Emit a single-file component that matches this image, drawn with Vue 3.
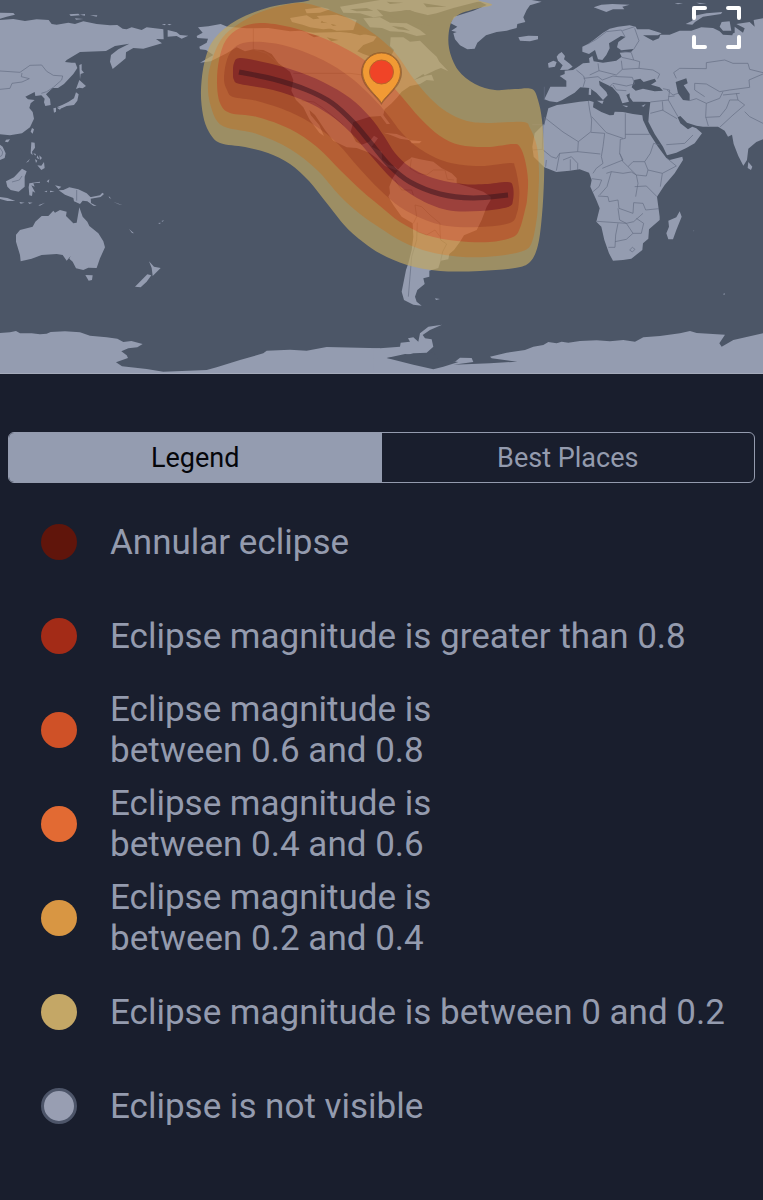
<script setup>
import { ref } from 'vue'

const activeTab = ref('legend')

const legend = [
  { tone: 'annular', label: 'Annular eclipse' },
  { tone: 'over80', label: 'Eclipse magnitude is greater than 0.8' },
  { tone: 'over60', label: 'Eclipse magnitude is\nbetween 0.6 and 0.8' },
  { tone: 'over40', label: 'Eclipse magnitude is\nbetween 0.4 and 0.6' },
  { tone: 'over20', label: 'Eclipse magnitude is\nbetween 0.2 and 0.4' },
  { tone: 'over0', label: 'Eclipse magnitude is between 0 and 0.2' },
  { tone: 'none', label: 'Eclipse is not visible' },
]

// Catmull-Rom spline through a list of "x,y" points
function smooth(text, closed) {
  const p = text.split(' ').map((s) => s.split(',').map(Number))
  const n = p.length
  const at = (i) => (closed ? p[(i + n) % n] : p[Math.max(0, Math.min(n - 1, i))])
  let d = `M${p[0]}`
  for (let i = 0; i < (closed ? n : n - 1); i++) {
    const [a, b, c, e] = [at(i - 1), at(i), at(i + 1), at(i + 2)]
    d += `C${b[0] + (c[0] - a[0]) / 6},${b[1] + (c[1] - a[1]) / 6} ${c[0] - (e[0] - b[0]) / 6},${c[1] - (e[1] - b[1]) / 6} ${c}`
  }
  return closed ? d + 'Z' : d
}

const bands = [
  { tone: 'over0', d: smooth('325,-4 307,1 270,7 237,20 215,38 205,60 201,90 203,115 209,132 220,143 245,147 268,153 290,164 309,181 325,201 346,227 363,242 381,254 407,265 440,271 480,271 515,268 530,262 538,245 542,215 544,180 544,150 542,120 538,100 532,89 515,89 495,90 475,84 458,70 449,48 450,26 458,15 475,9 492,5 480,1 460,-4', true) },
  { tone: 'over20', d: smooth('300,3 273,8 250,17 223,37 210,67 208,90 211,107 217,121 228,128 257,134 290,149 317,170 340,196 360,214 380,228 403,242 430,252 463,257 497,256 523,251 532,242 537,217 538,200 539,173 537,147 530,128 523,122 490,123 467,121 447,112 430,98 413,78 397,55 383,41 367,29 348,18 323,8', true) },
  { tone: 'over40', d: smooth('260,23 240,28 226,40 219,60 217,83 220,103 230,113 257,117 290,129 317,147 340,170 362,191 380,206 400,222 426,235 457,241 490,242 513,237 520,228 525,210 527,200 528,180 525,160 520,147 513,144 487,147 460,145 440,136 420,118 402,97 385,78 370,64 350,51 323,38 290,27', true) },
  { tone: 'over60', d: smooth('243,43 232,50 226,63 224,80 227,90 233,97 257,101 290,112 317,127 338,144 359,168 380,190 400,207 423,219 447,226 480,227 510,223 517,213 519,200 519,187 515,167 510,163 480,166 447,162 420,149 402,133 388,115 372,97 350,77 323,60 290,47 263,42', true) },
  { tone: 'over80', d: smooth('240,58 234,63 233,73 234,80 240,84 273,90 305,101 330,115 351,133 372,157 393,180 417,198 447,210 480,211 508,207 513,200 513,187 508,182 485,184 463,184 433,178 410,167 395,153 384,136 370,117 350,98 323,82 293,70 263,62', true) },
]
const track = smooth('239,72 273,79 307,90 332,103 353,122 370,142 390,166 410,182 440,194 473,198 508,195', false)
</script>

<template>
  <main class="page">
    <section class="map" aria-label="Eclipse visibility map">
      <svg class="world" viewBox="0 0 763 374" role="img" aria-label="World map with eclipse magnitude zones">
        <rect class="ocean" width="763" height="374" />
        <!-- East Asia -->
        <g class="land" transform="scale(.33333)">
          <path d="M0 60L40 57 75 63 110 58 146 60 155 72 170 74 205 68 225 72 250 64 290 72 330 76 352 75 368 86 380 88 395 82 425 90 440 82 490 88 491 118 468 117 486 130 430 146 400 144 378 157 377 175 360 189 338 207 330 185 333 165 355 148 388 131 345 138 318 153 240 156 200 180 195 186 215 188 226 188 232 204 220 222 192 252 174 264 158 264 138 283 150 297 152 315 136 318 132 307 134 296 124 286 106 288 104 276 76 290 84 298 104 300 92 310 88 324 98 336 102 356 90 382 66 400 30 406 0 403Z" />
          <path d="M0 38L40 39 45 44 20 50 0 56ZM208 43L235 41 240 46 212 48ZM240 44L255 42 255 47ZM270 46L292 46 290 50ZM225 55L250 57 228 59ZM485 72L498 72 494 76ZM502 72L515 72 508 76ZM503 90L530 97 540 105 565 107 545 116 530 108 503 110ZM238 195L245 192 245 210 252 218 242 222 240 238ZM238 240L258 258 248 265 238 263 228 267ZM228 277L236 283 232 302 222 315 200 318 185 325 170 322 188 314 206 305 222 295ZM160 325L168 323 168 335 162 338ZM172 325L186 321 180 329ZM96 384L102 388 98 401 92 395ZM18 419L30 418 24 427 15 425ZM0 434L8 440 17 460 14 474 0 480ZM94 427L104 428 105 443 96 455 98 466 92 460ZM100 460L108 462 106 467ZM112 466L118 478 110 474ZM118 466L126 474 120 480ZM105 477L112 482 108 489ZM132 486L134 504 124 510 112 496 124 497ZM78 488L90 476 85 485ZM18 544L42 532 66 506 80 514 74 530 74 560 56 575 32 570 22 560ZM88 550L120 545 120 548 100 550 104 560 94 556 106 578 98 574 96 588 88 586 86 562ZM140 544L148 538 146 548ZM133 574L142 572 140 577ZM150 572L164 574 150 577ZM165 556L184 560 176 567Z" />
          <path d="M176 571L190 570 208 562 235 568 260 580 272 592 273 609 290 618 280 617 262 604 248 602 240 612 222 604 220 594 195 584ZM270 592L300 586 307 578 312 582 302 591 272 596ZM326 588L334 596 328 594ZM0 591L22 594 46 603 22 603 0 597ZM58 606L74 608 62 611ZM84 607L98 608 88 612ZM115 616L135 608 120 617ZM340 605L368 616 356 613ZM474 669L482 668 480 672ZM484 663L492 661 488 665ZM387 687L402 700 396 699Z" />
          <path d="M48 704L60 690 98 680 106 665 125 648 145 648 160 632 165 638 180 630 200 635 198 648 220 670 230 668 238 622 248 650 262 665 268 678 295 700 310 724 315 742 300 775 290 804 265 803 250 810 228 805 218 785 208 776 212 768 200 782 188 765 170 762 125 765 95 776 62 784 60 765 48 725ZM256 825L278 826 276 840 266 842ZM447 784L462 800 482 804 470 816 458 828 455 804ZM442 823L454 826 440 845 422 862 405 860Z" />
          <path d="M0 999L30 997 48 993 60 1000 95 1000 120 1003 140 1001 152 996 195 994 240 997 270 1007 320 1012 352 1016 370 1026 394 1023 428 1032 412 1042 385 1045 364 1054 380 1066 384 1074 348 1087 366 1099 440 1107 490 1115 620 1110 650 1102 720 1080 790 1060 800 1052 870 1049 920 1052 980 1041 1140 1045 1140 1125 0 1125Z" />
        </g>
        <path class="border" transform="scale(.33333)" d="M0 213L60 217 90 196 125 195 140 214 160 226 188 228 185 240 160 262 140 275 124 280 M0 268L30 265 36 250 66 246 88 236 64 230 66 219 M230 570V602M36 546L58 540 66 528M0 444L8 456 6 466 0 470" />

        <!-- North America -->
        <g transform="translate(190 0) scale(.33333)">
          <path class="land" d="M24 82L55 79 92 72 112 80 170 85 235 84 300 94 330 92 370 98 450 96 520 102 560 110 550 124 520 135 502 154 520 162 565 178 600 175 612 150 600 138 602 112 640 112 660 125 690 122 718 150 740 170 748 185 775 214 753 204 737 210 700 228 725 224 732 242 710 240 690 252 660 258 635 275 622 292 605 310 584 328 580 345 600 372 590 372 572 348 540 350 490 366 482 395 498 425 515 434 538 425 552 407 564 415 545 440 575 455 576 478 595 494 615 500 628 512 615 510 585 498 560 475 538 458 500 444 470 442 430 422 405 390 375 345 358 330 362 345 388 376 402 408 388 398 358 358 340 322 318 300 304 272 310 240 300 215 265 190 245 162 220 150 190 148 165 154 140 142 110 160 62 184 30 188 70 165 48 150 30 148 28 140 50 128 54 116 22 114 20 108 38 98Z" />
          <path class="land" d="M300 54L350 46 370 58 400 54 392 68 420 70 436 84 400 88 360 82 338 74 306 66ZM345 28L395 22 420 28 390 38 350 40ZM380 48L440 44 500 60 490 90 440 92 410 82 440 76 400 66ZM450 20L570 0 910 0 860 6 790 24 740 40 700 48 660 30 600 36 560 28 580 48 550 52 510 40 460 38ZM520 55L570 52 600 68 650 70 690 90 708 104 680 108 640 96 600 94 576 84 540 82Z" />
          <path class="water" d="M590 42L650 30 710 44 735 62 720 78 680 70 630 62ZM605 78L640 82 660 92 625 88ZM470 96L520 90 550 98 510 106ZM672 240L700 222 705 228ZM590 5L640 8 600 12ZM700 10L770 20 710 22ZM480 28L530 24 550 32 500 34ZM350 100L390 108 372 112ZM410 112L446 120 424 124Z" />
          <path class="land" d="M580 398L620 402 650 414 660 421 630 416 600 404ZM660 421L695 424 688 430 665 430Z" />
          <path class="border" d="M190 85V148L230 160 262 188M310 220L480 220 540 228 590 250 M335 302L372 306 400 325 425 345 460 375" />
        </g>

        <!-- Greenland, Iceland, British Isles -->
        <path class="land" transform="translate(380 0) scale(.33333)" d="M232 80L212 70 222 50 280 32 320 15 290 0 455 0 485 5 450 16 440 30 430 52 436 66 412 72 410 84 380 92 350 96 318 106 292 128 284 146 262 148 240 136 225 118 220 100 230 96 214 92ZM415 112L445 107 474 108 474 118 450 124 420 122ZM536 162L545 156 555 168 552 178 570 192 578 200 564 209 540 210 548 196 534 182 530 170ZM504 190L520 182 530 186 525 200 506 203Z" />

        <!-- South America -->
        <g transform="translate(330 90) scale(.33333)">
          <path class="land" d="M205 238L225 215 240 206 245 202 270 208 310 215 335 235 365 250 380 265 380 280 430 295 460 305 482 320 482 330 470 350 455 390 440 420 402 436 390 455 372 480 358 492 355 508 332 512 325 534 298 542 298 560 280 565 284 582 262 600 255 620 260 635 275 647 250 644 222 630 215 605 228 540 235 520 245 480 250 440 248 400 215 380 190 345 175 320 180 310 178 290 188 265ZM315 625L330 627 318 630Z" />
          <path class="border" d="M244 208L240 235 265 250 290 255 M195 270L215 300 245 300 250 315 M290 255L310 240 345 240 352 268 372 270 M250 400L260 380 255 345 275 350 300 375 330 400 330 420 M262 398L260 450 245 500 240 560 235 620 M330 420L332 450 350 462 338 485 332 512 M260 425L290 435 315 420 330 440" />
        </g>

        <!-- Europe, Africa, West Asia -->
        <g transform="translate(563 0) scale(.33333)">
          <path class="land" d="M-38 260L10 260 10 242 -10 228 5 222 5 212 30 210 45 200 60 190 80 188 78 175 88 168 92 184 120 188 160 182 176 170 170 158 205 155 212 147 175 151 162 142 166 126 188 110 174 108 138 130 140 145 130 165 118 180 105 178 96 150 78 162 58 155 58 140 75 132 95 118 120 98 140 86 165 80 200 76 218 80 222 88 258 88 296 100 285 106 240 106 270 122 288 115 292 104 320 104 350 92 385 92 415 82 450 84 470 94 500 104 515 98 515 80 540 98 545 85 520 72 560 66 575 80 572 60 600 55V418L580 426 556 446 552 480 541 497 526 468 512 432 507 404 495 410 485 392 465 380 420 380 400 377 372 368 352 348 344 352 352 370 375 388 388 380 400 385 417 400 395 430 370 444 340 458 312 466 300 440 275 402 256 365 258 340 262 306 235 305 210 305 200 292 200 280 190 285 198 305 178 310 168 284 148 262 120 248 108 242 110 256 130 276 134 286 120 300 100 278 80 264 52 262 35 278 18 288 -2 300 -18 307 -40 304 -56 298Z" />
          <path class="water" d="M206 262L214 240 232 236 242 246 262 240 275 236 280 244 264 254 290 262 300 272 275 274 240 266 218 272ZM338 246L370 235 374 250 362 256 380 282 380 302 360 300 345 280ZM470 94L500 74 512 90 508 106 480 104Z" />
          <path class="land" d="M476 66L500 64 505 92 480 92 470 80ZM368 72L388 62 390 48 430 40 478 36 474 42 420 50 396 66 388 74ZM92 22L115 14 148 12 200 14 178 20 184 28 150 28 130 36ZM78 265L85 265 84 285 77 284ZM102 302L122 302 118 312ZM178 316L196 318 190 322ZM235 318L248 312 242 320ZM556 486L568 500 564 510 554 504ZM335 10L360 9 345 13ZM400 8L430 10 410 12Z" />
          <path class="land" d="M-18 315L0 313 50 305 80 302 92 306 90 322 115 336 140 346 152 345 155 335 180 336 210 342 238 346 240 360 258 398 285 440 310 474 320 480 358 470 360 480 335 520 305 555 282 590 290 650 290 660 258 688 256 716 240 730 238 750 205 776 180 780 150 782 138 760 124 720 115 680 100 665 110 625 100 600 82 560 86 540 78 518 50 508 20 512 -20 516 -56 502 -88 470 -92 440 -85 400 -55 370 -44 325Z" />
          <path class="land" d="M350 634L356 650 340 690 330 718 316 718 310 700 318 680 316 662 340 652ZM390 692L394 692 392 694ZM480 882L486 880 484 885Z" />
          <path class="border" d="M76 303L80 330 86 360 84 395 46 425 0 396-56 352 M86 350L130 398 180 415 M187 340V415L172 418 170 460 180 485 195 500 M187 403H260 M46 425L44 455-10 460-20 475 M84 397L125 400 120 440 115 470 120 490 100 505 90 520 M44 455L112 462 M170 460L180 480 130 500 118 505 M195 500L210 485 245 485 262 460 272 430 290 435 M245 485L255 510 298 520 340 498 312 475 M298 520L292 560 M195 500L220 525 250 528 255 510 M220 525L225 550 218 590 M215 560L250 558 282 590 M130 520L145 515 180 520 205 516 220 525 M145 515L132 560 110 585 M105 588L135 590 138 605 165 600 168 625 210 640 212 608 240 610 248 630 288 626 M102 664L190 670 212 665 240 640 M165 670L158 705 156 742 136 742 M165 625L170 660 190 670 210 700 235 700 242 670 220 655 M156 725L190 718 210 700 M200 750L208 742 216 748 208 756ZM0 480L25 470 44 490 44 510M22 478V512M86 536L116 540 108 560 90 575 M-56 374H-92M-56 352V374M-60 374L-62 448-92 450M-20 475L-35 470-62 448M-10 460L-20 512M-50 480L-52 500" />
          <path class="border" d="M-56 260V300M75 132L100 118 130 95 175 90 185 108M178 92L215 80M215 85L228 122 212 148M172 152L205 158 212 180 176 172M105 190L108 212 160 225 178 208 175 182M212 180L230 185 228 205 178 208M228 205L270 210 290 222 284 236M40 210L62 228 66 242 60 262M62 235L105 230 118 240 150 228 165 230M165 230L208 232 215 252 190 258 150 250 140 260M108 212L80 225M150 255L160 270 190 272M262 306L316 300 320 270 300 266M316 300L345 350M316 290L335 288M262 340L300 330 298 304M298 330L342 356M310 434L365 430 390 405M345 280L330 285 312 270M340 235L332 218 350 205 430 206 430 188 485 180 510 190 555 190 560 208 600 218M395 270L395 250 430 252 470 275 500 270 560 262 558 240 600 222M380 302L400 296 430 310 470 295 480 275M430 310L428 350 436 378M428 352L470 350 490 325 500 300 525 300M470 382L510 345 545 315 525 300 520 280M545 335L560 350 600 370M395 270L425 290M480 285L530 280" />
        </g>

        <!-- Antarctica, eastern part -->
        <path class="land" transform="translate(380 180) scale(.33333)" d="M-20 506L60 500 62 488 90 485 84 475 100 472 115 485 120 460 145 440 186 434 150 450 128 465 135 475 155 478 160 500 140 518 100 520 70 528 20 534 60 538 100 530 160 545 158 555 185 560 190 548 225 545 240 533 275 534 280 546 220 554 330 550 412 545 335 535 330 530 380 518 435 510 460 500 490 495 505 486 530 490 545 485 565 488 600 483 650 481 690 484 730 480 765 485 790 472 840 468 900 460 930 453 950 459 1035 464 1018 490 1025 500 1060 480 1149 460V582H-20Z" />
        <path class="water" transform="translate(380 180) scale(.33333)" d="M20 534L75 522 130 525 160 515 175 540 235 546 190 560 160 568 100 554Z" />
        <path class="shore" d="M0 373.5H763" />

        <g opacity=".7">
          <path v-for="band in bands" :key="band.tone" :class="['zone', band.tone]" :d="band.d" />
        </g>
        <path class="track" :d="track" />

        <!-- Location pin -->
        <path class="pin-shadow" d="M381.500 105C377 96 361 87 361 72.500A20.500 20.500 0 0 1 402 72.500C402 87 386 96 381.500 105Z" />
        <path class="pin" d="M381.500 103C377 95 362.500 86 362.500 72A19 19 0 0 1 400.500 72C400.500 86 386 95 381.500 103Z" />
        <circle class="pin-core" cx="381.500" cy="72" r="12" />
      </svg>
      <button class="expand" type="button" aria-label="Full screen map">
        <svg viewBox="0 0 49 43" aria-hidden="true">
          <path d="M2 12V2H13M36 2H47V12M47 31V41H36M13 41H2V31" />
        </svg>
      </button>
    </section>

    <div class="tabs" role="tablist">
      <button type="button" role="tab" :aria-selected="activeTab === 'legend'" @click="activeTab = 'legend'">Legend</button>
      <button type="button" role="tab" :aria-selected="activeTab === 'places'" @click="activeTab = 'places'">Best Places</button>
    </div>

    <ul class="legend">
      <li v-for="item in legend" :key="item.tone">
        <span :class="['dot', item.tone]"></span>
        <span class="label">{{ item.label }}</span>
      </li>
    </ul>
  </main>
</template>

<style>
body { background: #191e2d; }
</style>

<style scoped>
.page {
  min-height: 100vh;
  box-sizing: border-box;
  background: #191e2d;
  color: #949bae;
  font-family: Roboto, "Liberation Sans", sans-serif;
}
.map { position: relative; }
.world { display: block; width: 100%; height: auto; }
.ocean, .water { fill: #4c5667; }
.land { fill: #949cb0; }
.border { fill: none; stroke: #636c82; stroke-width: 2; stroke-linejoin: round; }
.shore { stroke: #a4aaba; stroke-width: 1; }
.annular { --tone: #60150b; }
.over80 { --tone: #a32b17; }
.over60 { --tone: #cf5127; }
.over40 { --tone: #e26a33; }
.over20 { --tone: #d89643; }
.over0 { --tone: #c4a766; }
.none { --tone: #989eb2; }
.zone { fill: var(--tone); }
.zone.over80 { fill: #a01b0c; }
.zone.over60 { fill: #cc4c14; }
.zone.over40 { fill: #e2641f; }
.zone.over20 { fill: #d79238; }
.zone.over0 { fill: #bfa664; }
.track { fill: none; stroke: #33121c; stroke-opacity: .5; stroke-width: 5; }
.pin { fill: #f19a34; stroke: #a66a2c; stroke-width: 1; }
.pin-shadow { fill: #6b3a20; fill-opacity: .45; }
.pin-core { fill: #f04427; stroke: #b8642a; stroke-width: 1; }
.expand {
  position: absolute;
  top: 6px;
  right: 22px;
  padding: 0;
  border: 0;
  background: none;
  cursor: pointer;
}
.expand svg { display: block; width: 49px; height: 43px; }
.expand path { fill: none; stroke: #fff; stroke-width: 4; stroke-linecap: round; stroke-linejoin: round; }
.tabs {
  display: grid;
  grid-template-columns: 1fr 1fr;
  margin: 58px 8px 0;
  border: 1px solid #949bae;
  border-radius: 6px;
  overflow: hidden;
}
.tabs button {
  padding: 2px 0 0;
  border: 0;
  background: none;
  color: inherit;
  font: 27px/47px Roboto, "Liberation Sans", sans-serif;
  cursor: pointer;
}
.tabs button[aria-selected="true"] { background: #949cb0; color: #05060a; }
.legend { margin: 12px 0 0; padding: 0; list-style: none; }
.legend li {
  display: flex;
  align-items: center;
  gap: 33px;
  min-height: 94px;
  padding: 0 16px 0 41px;
}
.dot { flex: none; width: 36px; height: 36px; border-radius: 50%; background: var(--tone); box-sizing: border-box; }
.dot.none { border: 3px solid #4d5569; }
.label { font-size: 35px; line-height: 41px; white-space: pre-line; }
</style>
